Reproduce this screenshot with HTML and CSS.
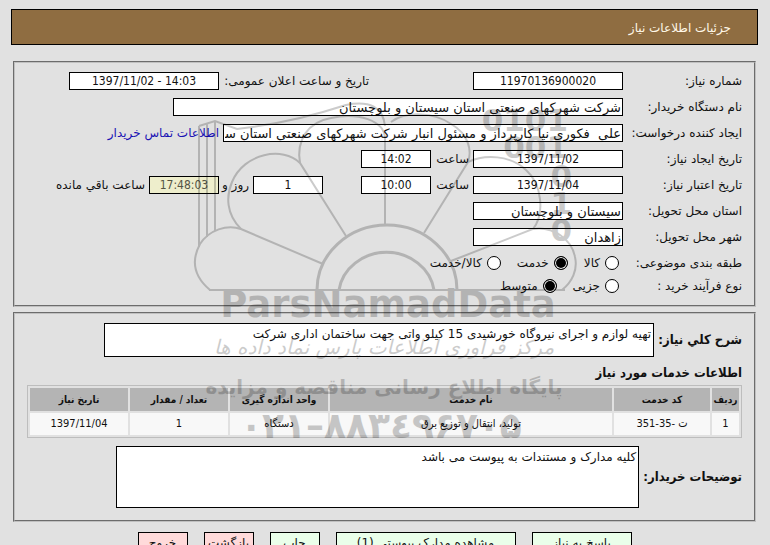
FILE: index.html
```
<!DOCTYPE html>
<html lang="fa" dir="rtl">

<head>
    <meta charset="UTF-8">
    <title>جزئیات اطلاعات نیاز</title>
    <link rel="stylesheet" href="styles.css">
</head>

<body>
    <header class="title-bar">
        <h1>جزئیات اطلاعات نیاز</h1>
    </header>
    <main>
        <fieldset class="box need-info">
            <div class="row">
                <label class="caption" for="need-no">شماره نیاز:</label>
                <input class="mid num" id="need-no" type="text" value="11970136900020" readonly>
                <label class="announce" for="announce">تاریخ و ساعت اعلان عمومی:</label>
                <input class="mid num" id="announce" type="text" value="1397/11/02 - 14:03" readonly>
            </div>
            <div class="row">
                <label class="caption" for="buyer">نام دستگاه خریدار:</label>
                <input class="widest" id="buyer" type="text" value="شرکت شهرکهای صنعتی استان سیستان و بلوچستان" readonly>
            </div>
            <div class="row">
                <label class="caption" for="creator">ایجاد کننده درخواست:</label>
                <input class="wide" id="creator" type="text" value="علی  فکوری نیا کارپرداز و مسئول انبار شرکت شهرکهای صنعتی استان سیستان و بلوچستان" readonly>
                <a class="contact" href="#">اطلاعات تماس خریدار</a>
            </div>
            <div class="row">
                <label class="caption" for="create-date">تاریخ ایجاد نیاز:</label>
                <input class="mid num" id="create-date" type="text" value="1397/11/02" readonly>
                <label class="hour" for="create-hour">ساعت</label>
                <input class="short num" id="create-hour" type="text" value="14:02" readonly>
            </div>
            <div class="row">
                <label class="caption" for="valid-date">تاریخ اعتبار نیاز:</label>
                <input class="mid num" id="valid-date" type="text" value="1397/11/04" readonly>
                <label class="hour" for="valid-hour">ساعت</label>
                <input class="short num" id="valid-hour" type="text" value="10:00" readonly>
                <input class="short num days" id="days" type="text" value="1" readonly>
                <label class="day-label" for="days">روز و</label>
                <input class="short num remain" id="remain" type="text" value="17:48:03" readonly>
                <label for="remain">ساعت باقي مانده</label>
            </div>
            <div class="row">
                <label class="caption" for="province">استان محل تحویل:</label>
                <input class="mid" id="province" type="text" value="سیستان و بلوچستان" readonly>
            </div>
            <div class="row">
                <label class="caption" for="city">شهر محل تحویل:</label>
                <input class="mid" id="city" type="text" value="زاهدان" readonly>
            </div>
            <div class="row radios" role="radiogroup" aria-labelledby="kind-caption">
                <span class="caption" id="kind-caption">طبقه بندی موضوعی:</span>
                <label class="option"><input type="radio" name="kind">کالا</label>
                <label class="option"><input type="radio" name="kind" checked>خدمت</label>
                <label class="option"><input type="radio" name="kind">کالا/خدمت</label>
            </div>
            <div class="row radios" role="radiogroup" aria-labelledby="process-caption">
                <span class="caption" id="process-caption">نوع فرآیند خرید :</span>
                <label class="option"><input type="radio" name="process">جزیی</label>
                <label class="option"><input type="radio" name="process" checked>متوسط</label>
            </div>
        </fieldset>

        <fieldset class="box need-detail">
            <div class="text-row">
                <label for="summary">شرح کلي نیاز:</label>
                <textarea class="summary" id="summary" readonly>تهیه لوازم و اجرای نیروگاه خورشیدی 15 کیلو واتی جهت ساختمان اداری شرکت</textarea>
            </div>
            <h2>اطلاعات خدمات مورد نیاز</h2>
            <table class="services">
                <thead>
                    <tr>
                        <th class="col-row">ردیف</th>
                        <th class="col-code">کد خدمت</th>
                        <th>نام خدمت</th>
                        <th class="col-unit">واحد اندازه گیری</th>
                        <th class="col-unit">تعداد / مقدار</th>
                        <th class="col-unit">تاریخ نیاز</th>
                    </tr>
                </thead>
                <tbody>
                    <tr>
                        <td>1</td>
                        <td>ت <bdi dir="ltr">351-35-</bdi></td>
                        <td>تولید، انتقال و توزیع برق</td>
                        <td>دستگاه</td>
                        <td>1</td>
                        <td>1397/11/04</td>
                    </tr>
                </tbody>
            </table>
            <div class="text-row">
                <label class="notes-label" for="notes">توضیحات خریدار:</label>
                <textarea class="notes" id="notes" readonly>کلیه مدارک و مستندات به پیوست می باشد</textarea>
            </div>
        </fieldset>

        <div class="buttons">
            <button type="button" class="btn btn-reply">پاسخ به نیاز</button>
            <button type="button" class="btn btn-docs">مشاهده مدارک پیوستی (1)</button>
            <button type="button" class="btn">چاپ</button>
            <button type="button" class="btn btn-red">بازگشت</button>
            <button type="button" class="btn btn-red">خروج</button>
        </div>
    </main>

    <!-- واترمارک روی صفحه -->
    <svg class="watermark" viewBox="190 100 390 345" width="390" height="345" direction="ltr">
        <g class="logo-lines">
            <path d="M198 247V126M206 237V123M214 231V121M198 126L214 121L236 129Q290 123 345 105Q381 98 384 126" />
            <path d="M209 290C190 274 192 257 199 244C208 230 226 224 240 229L322 264" />
            <path d="M240 229C225 214 225 196 231 182C243 153 282 146 299 163L345 236" />
            <path d="M299 163C295 140 307 122 330 118C356 112 384 120 384 139V225" />
            <path d="M390 122C405 111 433 112 450 124C468 134 471 151 467 162L423 233" />
            <path d="M467 162C484 154 509 155 525 170C541 184 544 214 532 229L450 261" />
            <path d="M532 229C553 226 571 240 574 257C577 270 571 282 561 290" />
            <path d="M208 290H564" />
            <path class="hub" d="M316 290A70 65 0 0 1 456 290M338 290A48 44 0 0 1 433 290" />
        </g>
        <g class="digits">
            <text x="567" y="131">0101</text>
            <text x="567" y="158">001</text>
            <text x="571" y="187">0</text>
            <text x="571" y="214">1</text>
            <text x="571" y="241">0</text>
        </g>
        <text class="brand" x="387" y="317">ParsNamadData</text>
        <text class="slogan" x="383" y="354" direction="rtl">مرکز فرآوری اطلاعات پارس نماد داده ها</text>
        <text class="site" x="383" y="394" direction="rtl">پایگاه اطلاع رسانی مناقصه و مزایده</text>
        <text class="phone" x="380" y="438">۰۲۱–۸۸۳٤۹۶۷۰۵</text>
    </svg>
</body>

</html>
```
FILE: styles.css
```
* {
    box-sizing: border-box;
}

html {
    overflow: hidden;
}

body {
    position: relative;
    margin: 9px 12px 0 11px;
    background-color: #e1e1e1;
    color: #111;
    font-family: "DejaVu Sans", sans-serif;
    font-size: 12px;
    line-height: 16px;
}

.title-bar {
    background-color: #8f6d41;
    border: 1px solid #000;
    color: #fff8e8;
    padding: 10px 26px 8px;
}

.title-bar h1 {
    margin: 0;
    font-size: 12px;
    font-weight: normal;
}

.box {
    margin: 0 2px;
    border: 2px groove #c0c0c0;
    min-width: 0;
}

.need-info {
    margin-top: 16px;
    padding: 9px 12px 5px;
}

.need-detail {
    margin-top: 5px;
    padding: 9px 12px 12px;
}

.row {
    display: flex;
    align-items: center;
    gap: 4px;
    height: 18px;
    margin-bottom: 8px;
    white-space: nowrap;
}

.caption {
    flex: 0 0 115px;
}

input[type="text"] {
    flex: none;
    height: 18px;
    padding: 0 1px;
    border: 1px solid #000;
    background: #fff;
    color: #111;
    font: 13px "DejaVu Sans", sans-serif;
}

input[type="text"].num {
    direction: ltr;
    text-align: center;
    font: 12px "DejaVu Sans Condensed", "DejaVu Sans", sans-serif;
}

.mid {
    width: 150px;
}

.wide {
    width: 400px;
}

.widest {
    width: 450px;
}

.short {
    width: 70px;
}

.announce {
    width: 146px;
    margin-right: 100px;
}

.contact {
    color: #1a12b4;
    text-decoration: none;
}

.hour {
    width: 34px;
}

.days {
    margin-right: 34px;
}

.day-label {
    width: 26px;
}

input[type="text"].remain {
    background: #eeeecc;
    color: #555544;
}

.radios {
    margin-bottom: 5px;
}

.option {
    display: flex;
    align-items: center;
    gap: 5px;
    margin-right: 12px;
}

.radios .option:first-of-type {
    margin-right: 4px;
}

.option input {
    appearance: none;
    width: 14px;
    height: 14px;
    margin: 0;
    border: 1px solid #000;
    border-radius: 50%;
    background: #fff;
}

.option input:checked {
    background: #000;
    box-shadow: inset 0 0 0 1px #fff;
}

.text-row {
    display: flex;
    align-items: center;
    gap: 4px;
}

.text-row label {
    flex: 0 0 84px;
    font: bold 13px/16px "DejaVu Sans Condensed", "DejaVu Sans", sans-serif;
    white-space: nowrap;
}

.text-row .notes-label {
    flex-basis: 97px;
}

textarea {
    min-width: 0;
    padding: 2px;
    border: 1px solid #000;
    background: #fff;
    color: #111;
    font: 12px/16px "DejaVu Sans", sans-serif;
    resize: none;
}

.summary {
    width: 550px;
    height: 34px;
}

.notes {
    width: 523px;
    height: 62px;
}

h2 {
    margin: 8px 0 4px;
    font: bold 13px/16px "DejaVu Sans Condensed", "DejaVu Sans", sans-serif;
}

.services {
    width: 100%;
    margin-bottom: 8px;
    table-layout: fixed;
    border: 1px solid #bdbdbd;
    border-spacing: 2px;
    font-family: "DejaVu Sans Condensed", "DejaVu Sans", sans-serif;
    font-size: 11px;
    text-align: center;
}

.services th,
.services td {
    padding: 0;
    white-space: nowrap;
}

.services th {
    height: 23px;
    background: #b4b4b4;
    font-size: 10px;
}

.services td {
    height: 22px;
    background: #f8f8f8;
}

.col-row {
    width: 27px;
}

.col-code {
    width: 96px;
}

.col-unit {
    width: 98px;
}

.buttons {
    display: flex;
    justify-content: center;
    gap: 16px;
    margin-top: 10px;
}

.btn {
    width: 50px;
    height: 22px;
    padding: 0;
    border: 1px solid #000;
    background: #eaffea;
    color: #111;
    font: inherit;
    white-space: nowrap;
}

.btn-reply {
    width: 100px;
}

.btn-docs {
    width: 180px;
}

.btn-red {
    background: #ffdada;
}

.watermark {
    position: absolute;
    top: 91px;
    left: calc(50% - 194px);
    opacity: 0.2;
    pointer-events: none;
}

.logo-lines {
    fill: none;
    stroke: #000;
    stroke-width: 2;
}

.logo-lines .hub {
    stroke-width: 3;
}

.digits {
    font: bold 31px "DejaVu Sans", sans-serif;
    text-anchor: end;
}

.watermark text {
    fill: #000;
}

.brand,
.slogan,
.site,
.phone {
    text-anchor: middle;
}

.brand {
    font: bold 37px "DejaVu Sans", sans-serif;
}

.slogan {
    font: italic 20px "DejaVu Sans", sans-serif;
}

.site {
    font: bold 20px "DejaVu Sans", sans-serif;
}

.phone {
    font: bold 36px "DejaVu Sans", sans-serif;
}
```
